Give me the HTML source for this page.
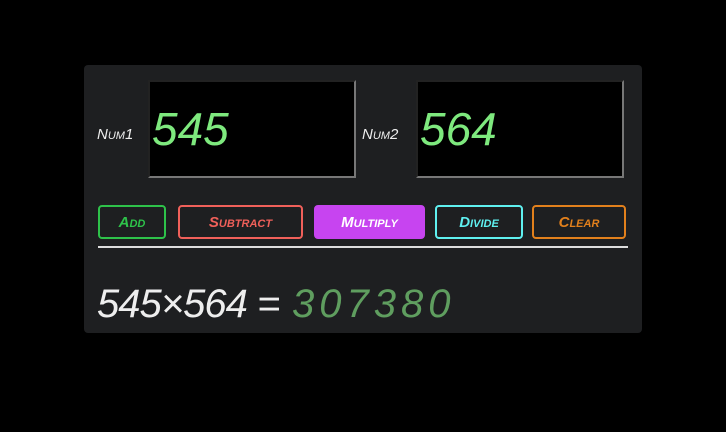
<!DOCTYPE html>
<html><head><style>
body{margin:0;width:726px;height:432px;background:#000;font-family:"Liberation Sans",sans-serif;position:relative;overflow:hidden}
.p{position:absolute;left:84px;top:65px;width:558px;height:268px;background:#1e1f21;border-radius:4px}
.lbl{position:absolute;color:#eee;font-size:15px;font-style:italic;font-variant:small-caps}
.in{position:absolute;top:80px;width:208px;height:98px;background:#000;border-top:2px solid #222;border-left:2px solid #222;border-right:2px solid #777;border-bottom:2px solid #777;box-sizing:border-box}
.in span{position:absolute;left:2px;top:20px;color:#7ee97e;font-size:46px;font-style:italic}
.b{position:absolute;top:205px;height:34px;box-sizing:border-box;border:2px solid;border-radius:4px;font-size:15px;font-weight:bold;font-style:italic;font-variant:small-caps;display:flex;align-items:center;justify-content:center}
.hr{position:absolute;left:98px;top:246px;width:530px;height:2px;background:#ddd}
.r{position:absolute;top:282px;font-size:40px;font-style:italic}
</style></head><body>
<div class="p"></div>
<div class="lbl" style="left:97px;top:126px">Num1</div>
<div class="in" style="left:148px"><span>545</span></div>
<div class="lbl" style="left:362px;top:126px">Num2</div>
<div class="in" style="left:416px"><span>564</span></div>
<div class="b" style="left:98px;width:68px;border-color:#2ec24a;color:#2ec24a">Add</div>
<div class="b" style="left:178px;width:125px;border-color:#f0605a;color:#f0605a">Subtract</div>
<div class="b" style="left:314px;width:111px;border-color:#c744f0;background:#c744f0;color:#fff">Multiply</div>
<div class="b" style="left:435px;width:88px;border-color:#5ff0f0;color:#5ff0f0">Divide</div>
<div class="b" style="left:532px;width:94px;border-color:#e2801c;color:#e2801c">Clear</div>
<div class="hr"></div>
<div class="r" style="left:97px;color:#eee;letter-spacing:-1px">545×564 =</div>
<div class="r" style="left:292px;color:#5f9e5f;letter-spacing:5px">307380</div>
</body></html>
